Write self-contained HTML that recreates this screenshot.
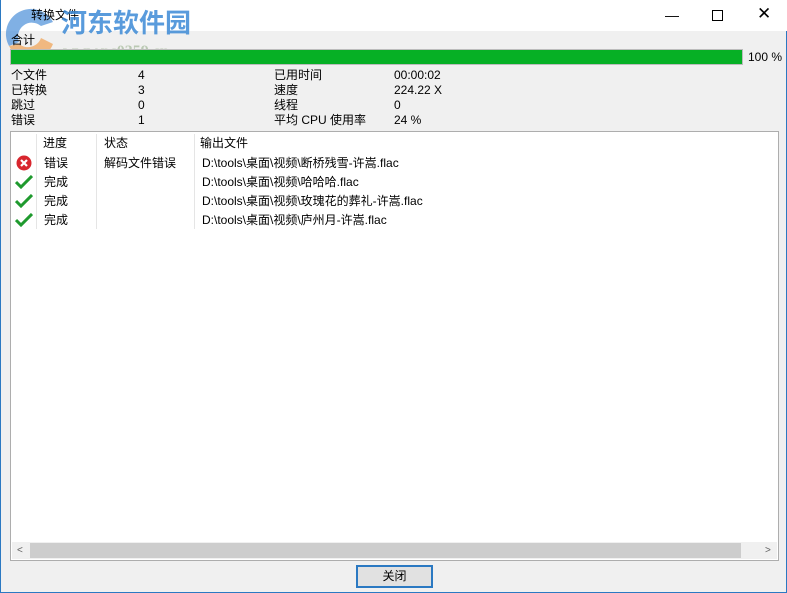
<!DOCTYPE html>
<html><head><meta charset="utf-8"><style>
*{margin:0;padding:0;box-sizing:border-box}
body{width:787px;height:593px;overflow:hidden;background:#f0f0f0;font-family:"Liberation Sans","Noto Sans CJK SC",sans-serif;font-size:12px;color:#000;position:relative}
.win{position:absolute;left:0;top:0;width:787px;height:593px;border:1px solid #2b79c2;border-top:none}
.title{position:absolute;left:0;top:0;width:786px;height:31px;background:#fff}
.a{position:absolute;white-space:nowrap;line-height:15px}
.pb{position:absolute;left:9px;top:49px;width:733px;height:16px;background:#06b025;border:1px solid #bcbcbc}
.list{position:absolute;left:9px;top:131px;width:769px;height:430px;background:#fff;border:1px solid #adadad}
.sep{position:absolute;top:2px;width:1px;height:95px;background:#e5e5e5}
.sb{position:absolute;left:1px;top:410px;width:765px;height:17px;background:#f0f0f0}
.btn{position:absolute;left:355px;top:565px;width:77px;height:23px;border:2px solid #2b79c2;background:#e1e1e1;text-align:center;line-height:19px}
</style></head><body>
<div class="win">
<div class="title"></div>
<svg style="position:absolute;left:0;top:4px" width="60" height="60" viewBox="0 0 60 60">
<path d="M8 42 A24 24 0 0 1 52 18 L40 22 A14 14 0 0 0 18 38 Z" fill="#4a8fd8" opacity=".7"/>
<path d="M8 42 A24 24 0 0 0 52 40 L40 34 A14 14 0 0 1 18 40 Z" fill="#f0a050" opacity=".7"/>
</svg>
<div class="a" style="left:30px;top:8px">转换文件</div>
<div class="a" style="left:60px;top:7px;font-size:26px;line-height:32px;font-weight:bold;color:#3d8ad6;opacity:.85">河东软件园</div>
<div class="a" style="left:62px;top:44px;font-size:16px;font-weight:bold;color:#7a9a6a;opacity:.45;font-family:'Liberation Serif',serif">www.pc0359.cn</div>
<div class="a" style="left:664px;top:8px;font-size:14px">—</div>
<div style="position:absolute;left:711px;top:10px;width:11px;height:11px;border:1px solid #000"></div>
<div class="a" style="left:756px;top:6px;font-size:17px">✕</div>
<div class="a" style="left:10px;top:33px">合计</div>
<div class="pb"></div>
<div class="a" style="left:747px;top:50px">100 %</div>
<div class="a" style="left:10px;top:68px">个文件<br>已转换<br>跳过<br>错误</div>
<div class="a" style="left:137px;top:68px">4<br>3<br>0<br>1</div>
<div class="a" style="left:273px;top:68px">已用时间<br>速度<br>线程<br>平均 CPU 使用率</div>
<div class="a" style="left:393px;top:68px">00:00:02<br>224.22 X<br>0<br>24 %</div>
<div class="list">
<div class="sep" style="left:25px"></div><div class="sep" style="left:85px"></div><div class="sep" style="left:183px"></div>
<div class="a" style="left:32px;top:4px">进度</div>
<div class="a" style="left:93px;top:4px">状态</div>
<div class="a" style="left:189px;top:4px">输出文件</div>
<svg style="position:absolute;left:5px;top:23px" width="16" height="16" viewBox="0 0 16 16"><circle cx="8" cy="8" r="7.5" fill="#d8262e"/><path d="M5 5L11 11M11 5L5 11" stroke="#fff" stroke-width="2.2"/></svg>
<svg style="position:absolute;left:4px;top:43px" width="18" height="14" viewBox="0 0 18 14"><path d="M1 7L6 12L17 1" fill="none" stroke="#1f9a2e" stroke-width="3"/></svg>
<svg style="position:absolute;left:4px;top:62px" width="18" height="14" viewBox="0 0 18 14"><path d="M1 7L6 12L17 1" fill="none" stroke="#1f9a2e" stroke-width="3"/></svg>
<svg style="position:absolute;left:4px;top:81px" width="18" height="14" viewBox="0 0 18 14"><path d="M1 7L6 12L17 1" fill="none" stroke="#1f9a2e" stroke-width="3"/></svg>
<div class="a" style="left:33px;top:22px;line-height:19px">错误<br>完成<br>完成<br>完成</div>
<div class="a" style="left:93px;top:22px;line-height:19px">解码文件错误</div>
<div class="a" style="left:191px;top:22px;line-height:19px">D:\tools\桌面\视频\断桥残雪-许嵩.flac<br>D:\tools\桌面\视频\哈哈哈.flac<br>D:\tools\桌面\视频\玫瑰花的葬礼-许嵩.flac<br>D:\tools\桌面\视频\庐州月-许嵩.flac</div>
<div class="sb"><div style="position:absolute;left:18px;top:1px;width:711px;height:15px;background:#cdcdcd"></div>
<div class="a" style="left:5px;top:1px;font-size:10px;color:#606060">&lt;</div>
<div class="a" style="left:753px;top:1px;font-size:10px;color:#606060">&gt;</div></div>
</div>
<div class="btn">关闭</div>
</div>
</body></html>
